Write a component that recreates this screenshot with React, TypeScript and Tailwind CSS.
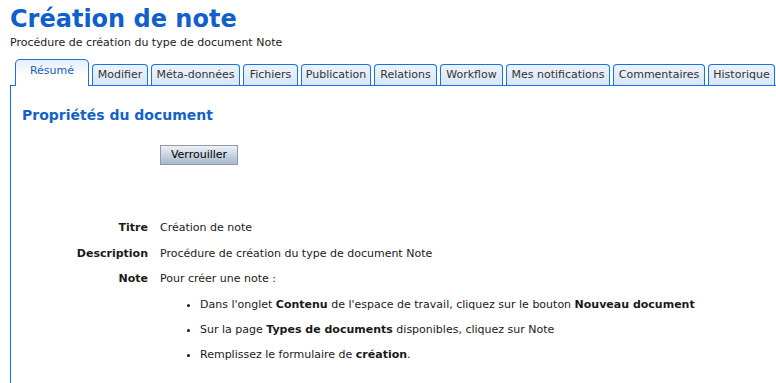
const tabs = [
  { label: 'Modifier', w: 'w-[56px]' },
  { label: 'Méta-données', w: 'w-[89px]' },
  { label: 'Fichiers', w: 'w-[55px]' },
  { label: 'Publication', w: 'w-[70px]' },
  { label: 'Relations', w: 'w-[63px]' },
  { label: 'Workflow', w: 'w-[63px]' },
  { label: 'Mes notifications', w: 'w-[104px]' },
  { label: 'Commentaires', w: 'w-[92px]' },
  { label: 'Historique', w: 'w-[67px]' },
];

export default function App() {
  return (
    <div className="h-[383px] w-[776px] overflow-hidden bg-white font-['DejaVu_Sans',Verdana,sans-serif] text-[11px] text-[#1a1a1a]">
      <div className="px-[10px] pt-[4px]">
        <h1 className="text-[24px] font-bold leading-[30px] text-[#0f5fcc]">Création de note</h1>
        <p className="mt-[2px] leading-[14px]">Procédure de création du type de document Note</p>
      </div>

      {/* onglets */}
      <div className="ml-[10px] mt-[9px] flex items-end gap-[3px] whitespace-nowrap border-b border-[#1672e6] pl-[5px]">
        <div className="-mb-px flex h-[27px] w-[74px] shrink-0 items-center justify-center rounded-t-[5px] border border-b-0 border-[#1672e6] bg-gradient-to-b from-[#e4eefb] to-white to-60% pb-[3px] text-[#1a5cb8]">
          Résumé
        </div>
        {tabs.map((t) => (
          <div
            key={t.label}
            className={`flex h-[21px] shrink-0 items-center justify-center rounded-t-[4px] border border-b-0 border-[#1672e6] bg-gradient-to-b from-[#edf3fc] to-[#d9e6f7] text-[#333] ${t.w}`}
          >
            {t.label}
          </div>
        ))}
      </div>

      <div className="ml-[10px] h-[300px] border-l border-[#1672e6] pl-[11px] pt-[20px]">
        <h2 className="text-[14px] font-bold leading-[18px] text-[#1462c8]">Propriétés du document</h2>

        <div className="mt-[21px] pl-[138px]">
          <button className="h-[20px] w-[78px] border border-[#8e9aab] bg-gradient-to-b from-[#eef2f7] via-[#c9d4e2] to-[#a8b7cb] text-[11px] text-black">
            Verrouiller
          </button>
        </div>

        <div className="mt-[56px] grid grid-cols-[126px_1fr] gap-x-[12px] gap-y-[11.5px] leading-[14px]">
          <div className="text-right font-bold">Titre</div>
          <div>Création de note</div>
          <div className="text-right font-bold">Description</div>
          <div>Procédure de création du type de document Note</div>
          <div className="text-right font-bold">Note</div>
          <div>
            <p>Pour créer une note :</p>
            <ul className="mt-[11.5px] flex list-disc flex-col gap-[11px] pl-[40px]">
              <li>
                Dans l'onglet <b>Contenu</b> de l'espace de travail, cliquez sur le bouton <b>Nouveau document</b>
              </li>
              <li>
                Sur la page <b>Types de documents</b> disponibles, cliquez sur Note
              </li>
              <li>
                Remplissez le formulaire de <b>création</b>.
              </li>
            </ul>
          </div>
        </div>
      </div>
    </div>
  );
}
